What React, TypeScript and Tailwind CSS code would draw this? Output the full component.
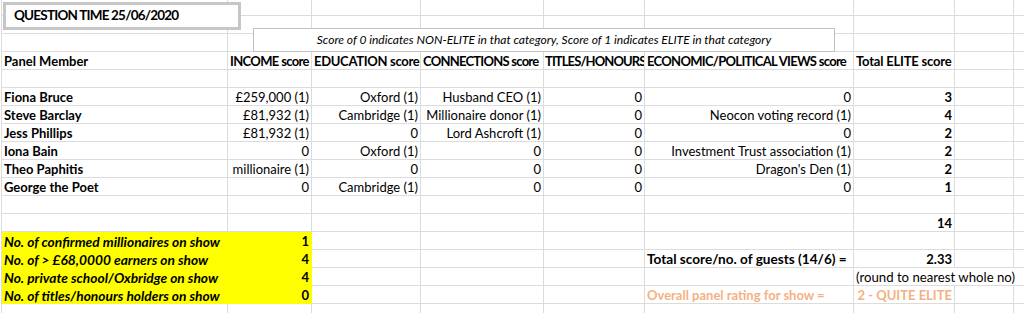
import React from "react";

type Cell = {
  t?: string;
  r?: boolean; // right aligned
  b?: boolean;
  i?: boolean;
  y?: boolean; // yellow fill
  o?: boolean; // orange text
  span?: number;
  cls?: string;
};

// column widths incl. the 1px right grid line
const widths = [226, 84, 109, 123, 101, 209, 101, 59, 80];

const E: Cell = {};
const blank = (): Cell[] => widths.map(() => ({}));

function dataRow(name: string, vals: string[], total: string): Cell[] {
  return [
    { t: name, b: true },
    ...vals.map((v) => ({ t: v, r: true })),
    { t: total, r: true, b: true },
    E,
    E,
  ];
}

function yellowRow(label: string, n: string, rest: Cell[]): Cell[] {
  return [
    { t: label, b: true, i: true, y: true, cls: "text-[13.75px]" },
    { t: n, r: true, b: true, y: true },
    ...rest,
  ];
}

const rows: Cell[][] = [
  blank(),
  blank(),
  blank(),
  [
    { t: "Panel Member", b: true },
    { t: "INCOME score", b: true, cls: "tracking-[-0.65px]" },
    { t: "EDUCATION score", b: true, cls: "tracking-[-0.3px]" },
    { t: "CONNECTIONS score", b: true, cls: "tracking-[-0.75px]" },
    { t: "TITLES/HONOURS score", b: true, cls: "tracking-[-0.9px] pl-px" },
    { t: "ECONOMIC/POLITICAL VIEWS score", b: true, cls: "tracking-[-0.7px]" },
    { t: "Total ELITE score", b: true, cls: "tracking-[-0.2px]" },
    E,
    E,
  ],
  blank(),
  dataRow("Fiona Bruce", ["£259,000 (1)", "Oxford (1)", "Husband CEO (1)", "0", "0"], "3"),
  dataRow("Steve Barclay", ["£81,932 (1)", "Cambridge (1)", "Millionaire donor (1)", "0", "Neocon voting record (1)"], "4"),
  dataRow("Jess Phillips", ["£81,932 (1)", "0", "Lord Ashcroft (1)", "0", "0"], "2"),
  dataRow("Iona Bain", ["0", "Oxford (1)", "0", "0", "Investment Trust association (1)"], "2"),
  dataRow("Theo Paphitis", ["millionaire (1)", "0", "0", "0", "Dragon's Den (1)"], "2"),
  dataRow("George the Poet", ["0", "Cambridge (1)", "0", "0", "0"], "1"),
  blank(),
  [E, E, E, E, E, E, { t: "14", r: true, b: true }, E, E],
  yellowRow("No. of confirmed millionaires on show", "1", [E, E, E, E, E, E, E]),
  yellowRow("No. of > £68,0000 earners on show", "4", [
    E,
    E,
    E,
    { t: "Total score/no. of guests (14/6) =", b: true, cls: "text-[13.6px]" },
    { t: "2.33", r: true, b: true },
    E,
    E,
  ]),
  yellowRow("No. private school/Oxbridge on show", "4", [
    E,
    E,
    E,
    E,
    { t: "(round to nearest whole no)", span: 3, cls: "text-[13.2px]" },
  ]),
  yellowRow("No. of titles/honours holders on show", "0", [
    E,
    E,
    E,
    { t: "Overall panel rating for show =", b: true, o: true },
    { t: "2 - QUITE ELITE", r: true, b: true, o: true },
    E,
    E,
  ]),
  blank(),
];

function Row({ cells, first }: { cells: Cell[]; first: boolean }) {
  const out: React.ReactNode[] = [];
  let col = 0;
  cells.forEach((c, k) => {
    if (col >= widths.length) return;
    const span = c.span ?? 1;
    let w = 0;
    for (let s = 0; s < span; s++) w += widths[col + s];
    col += span;
    out.push(
      <div
        key={k}
        style={{ width: w }}
        className={[
          "shrink-0 overflow-hidden whitespace-nowrap border-r border-b px-[2px] pt-[2px] flex items-center",
          first ? "h-[16px]" : "h-[18px]",
          c.r ? "justify-end" : "justify-start",
          c.y ? "bg-[#ffff00] border-[#ffff00]" : "border-[#dcdcdc]",
          c.b ? "font-bold" : "",
          c.i ? "italic" : "",
          c.o ? "text-[#f4b183]" : "text-black",
          c.cls ?? "",
        ].join(" ")}
      >
        {c.t}
      </div>
    );
  });
  return <div className="flex">{out}</div>;
}

export default function App() {
  return (
    <div
      className="relative w-[1024px] h-[313px] overflow-hidden bg-white text-[13px] leading-none"
      style={{ fontFamily: "Lato, Carlito, 'Liberation Sans', sans-serif" }}
    >
      <div className="pl-px">
        <div className="border-l border-[#dcdcdc]">
          {rows.map((r, i) => (
            <Row key={i} cells={r} first={i === 0} />
          ))}
        </div>
      </div>

      {/* title text box */}
      <div className="absolute left-[3px] top-[2px] w-[238px] h-[28px] bg-white border-[3px] border-[#c6c6c6] flex items-center pl-[8px] font-bold text-[13.5px] tracking-[-0.8px]">
        QUESTION TIME 25/06/2020
      </div>

      {/* note text box */}
      <div className="absolute left-[253px] top-[28px] w-[582px] h-[24px] bg-white border border-[#c0c0c0] flex items-center justify-center italic text-[12px]">
        Score of 0 indicates NON-ELITE in that category, Score of 1 indicates ELITE in that category
      </div>
    </div>
  );
}
